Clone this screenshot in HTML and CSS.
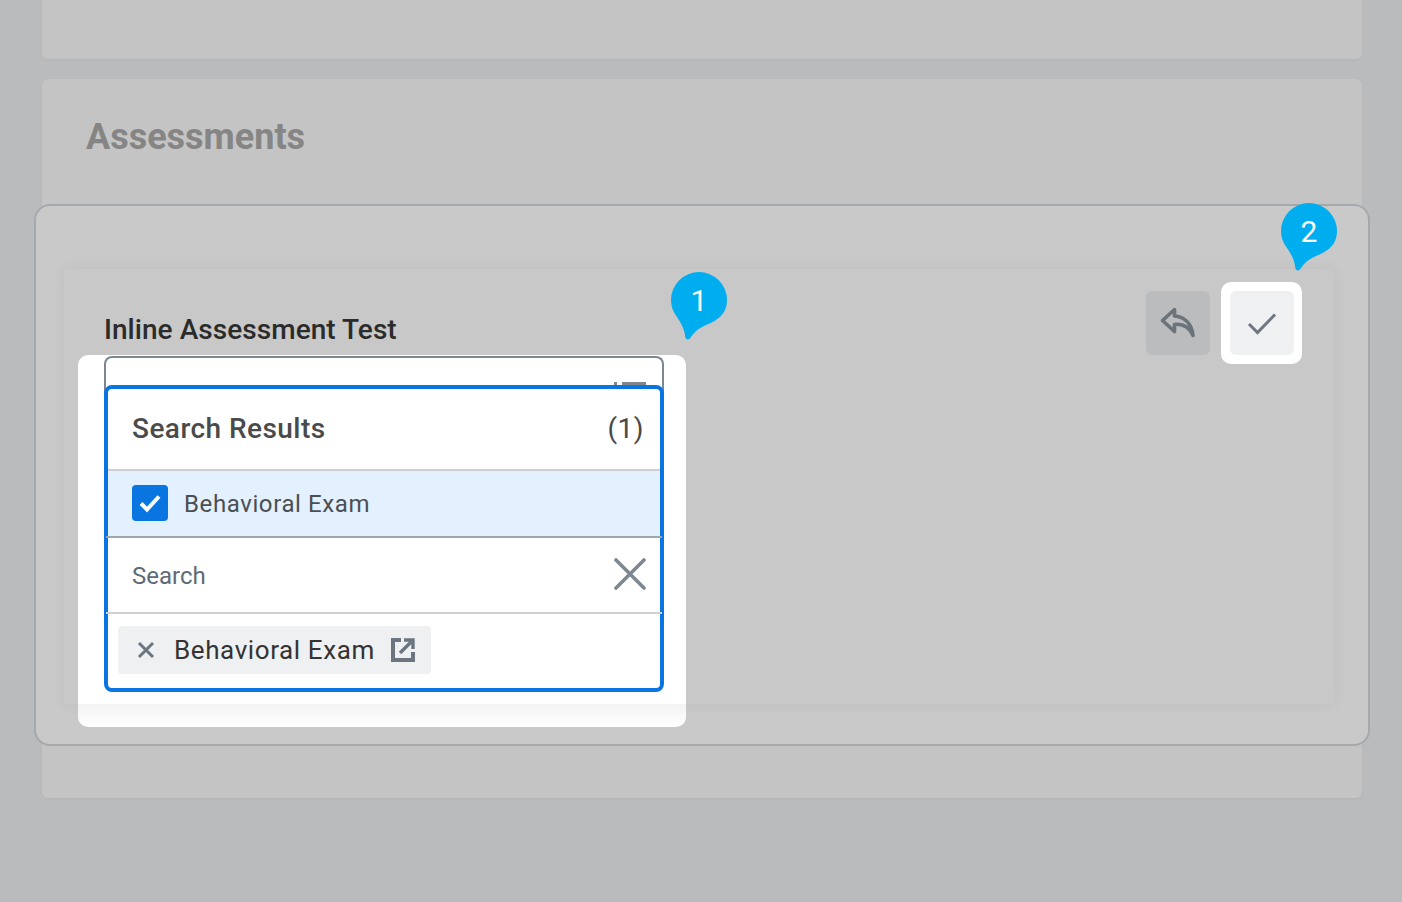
FILE: index.html
```html
<!DOCTYPE html>
<html lang="en">
<head>
<meta charset="utf-8">
<title>Assessments</title>
<link rel="stylesheet" href="styles.css">
</head>
<body>
<main class="page">
  <section class="card card-top"></section>
  <section class="card card-main"><h1 class="page-title">Assessments</h1></section>
</main>
<div class="modal">
  <div class="panel">
    <div class="spot spot-field"></div>
    <div class="panel-head">
      <h2 class="panel-title">Inline Assessment Test</h2>
      <div class="actions">
        <button class="btn btn-back" aria-label="Back">
          <svg width="36" height="32" viewBox="0 0 36 32" fill="none"><path d="M14.500 2.500 L2.500 13.500 L14.500 24.500 L14.500 17.500 C22 16.500 29 20 33 28.500 C32 17 24.500 9.500 14.500 9 Z" stroke="#6b737b" stroke-width="3.600" stroke-linejoin="round" stroke-linecap="round"/></svg>
        </button>
        <div class="spot-btn">
          <button class="btn btn-ok" aria-label="Confirm">
            <svg width="30" height="24" viewBox="0 0 30 24" fill="none"><path d="M2 13 L10.500 21.500 L28 3.500" stroke="#6f7780" stroke-width="3"/></svg>
          </button>
        </div>
      </div>
    </div>
    <div class="field">
      <svg class="field-icon" width="32" height="3" viewBox="0 0 32 3"><path d="M0 0h3v3H0zM8 0h24v3H8z" fill="#7e8791"/></svg>
      <div class="dropdown">
        <div class="results-head"><span>Search Results</span><span>(1)</span></div>
        <div class="result-row">
          <span class="checkbox"><svg width="24" height="20" viewBox="0 0 24 20" fill="none"><path d="M3 10.500 L9 16.500 L21 3.500" stroke="#fff" stroke-width="4"/></svg></span>
          <span>Behavioral Exam</span>
        </div>
        <div class="divider"></div>
        <div class="search-row">
          <span class="search-label">Search</span>
          <svg class="search-clear" width="32" height="32" viewBox="0 0 32 32" fill="none"><path d="M2 2 L30 30 M30 2 L2 30" stroke="#7e8791" stroke-width="3.600" stroke-linecap="round"/></svg>
        </div>
        <div class="chips">
          <div class="chip">
            <svg class="chip-x" width="18" height="18" viewBox="0 0 18 18" fill="none"><path d="M2 2 L16 16 M16 2 L2 16" stroke="#6b7680" stroke-width="3"/></svg>
            <span>Behavioral Exam</span>
            <svg class="chip-link" width="24" height="24" viewBox="0 0 24 24" fill="none"><path d="M10 2 H2 V22 H22 V14" stroke="#6b7680" stroke-width="4"/><path d="M9 15 L20 4 M13 2 H22 V11" stroke="#6b7680" stroke-width="3.400"/></svg>
          </div>
        </div>
      </div>
    </div>
  </div>
</div>
<svg class="pin pin-1" width="56" height="68" viewBox="0 0 56 68"><path d="M28 0A28 28 0 0 1 56 28C56 43 45 49 35 53C28 56 23 60 20 65C18 69 14 68 14 63C13 55 8 48 4 42C1 37 0 33 0 28A28 28 0 0 1 28 0Z" fill="#00aeef"/></svg>
<span class="pin-num pin-num-1">1</span>
<svg class="pin pin-2" width="56" height="68" viewBox="0 0 56 68"><path d="M28 0A28 28 0 0 1 56 28C56 43 45 49 35 53C28 56 23 60 20 65C18 69 14 68 14 63C13 55 8 48 4 42C1 37 0 33 0 28A28 28 0 0 1 28 0Z" fill="#00aeef"/></svg>
<span class="pin-num pin-num-2">2</span>
</body>
</html>
```

FILE: styles.css
```css
* { box-sizing: border-box; }
html, body { margin: 0; height: 100%; }
body {
  background: #babbbd;
  font-family: Roboto, "Liberation Sans", sans-serif;
  overflow: hidden;
  position: relative;
}
.page {
  display: flex;
  flex-direction: column;
  gap: 20px;
  padding: 0 40px 0 42px;
}
.card {
  background: #c4c4c4;
  border-radius: 0 0 6px 6px;
  box-shadow: 0 1px 3px rgba(0, 0, 0, 0.04);
}
.card-top { height: 59px; }
.card-main { height: 719px; border-radius: 6px; padding: 36px 44px; }
.page-title {
  margin: 0;
  font-size: 36px;
  line-height: 44px;
  font-weight: 700;
  color: #858585;
}
.modal {
  position: absolute;
  left: 34px;
  top: 204px;
  width: 1336px;
  height: 542px;
  padding: 63px 34px 0 28px;
  background: #c9c9c9;
  border: 2px solid #a5a9ae;
  border-radius: 16px;
}
.panel {
  position: relative;
  height: 435px;
  padding: 22px 40px 0;
  background: #c8c8c8;
  box-shadow: 0 0 14px rgba(0, 0, 0, 0.06);
}
.spot {
  position: absolute;
  background: linear-gradient(#fff 349px, #f3f3f3 349px, #fff 372px);
  border-radius: 10px;
}
.spot-field { left: 14px; top: 86px; width: 608px; height: 372px; }
.panel-head {
  position: relative;
  display: flex;
  justify-content: space-between;
  height: 65px;
}
.panel-title {
  margin: 0;
  align-self: flex-end;
  font-size: 28px;
  line-height: 34px;
  font-weight: 500;
  letter-spacing: 0.05px;
  color: #2b2b2b;
  padding-bottom: 9px;
}
.actions { display: flex; gap: 20px; align-items: flex-start; }
.btn {
  width: 64px;
  height: 64px;
  padding: 0;
  border: 0;
  border-radius: 6px;
  display: flex;
  align-items: center;
  justify-content: center;
}
.btn-back { background: #bbbcbd; }
.btn-ok { background: #eff0f2; }
.spot-btn {
  position: relative;
  margin: -9px -8px -9px -9px;
  padding: 9px 8px 9px 9px;
  background: #fff;
  border-radius: 10px;
}
.field {
  position: relative;
  width: 560px;
  height: 60px;
  background: #fff;
  border: 2px solid #7e8791;
  border-bottom: 0;
  border-radius: 8px 8px 0 0;
}
.field-icon { position: absolute; left: 508px; top: 24px; }
.dropdown {
  position: absolute;
  left: -2px;
  top: 27px;
  width: 560px;
  height: 307px;
  display: flex;
  flex-direction: column;
  background: #fff;
  border: 4px solid #0875e1;
  border-radius: 8px;
}
.results-head {
  height: 82px;
  padding: 0 16px 2px 24px;
  display: flex;
  align-items: center;
  justify-content: space-between;
  font-size: 28px;
  font-weight: 500;
  color: #4a4a4a;
  border-bottom: 2px solid #ced0d3;
  letter-spacing: 0.45px;
}
.results-head span:last-child { font-weight: 400; }
.result-row {
  height: 65px;
  padding: 0 24px;
  display: flex;
  align-items: center;
  gap: 16px;
  background: #e3f0fe;
  font-size: 24px;
  color: #4a4f54;
  letter-spacing: 0.6px;
}
.divider {
  height: 2px;
  margin: 0 -2px;
  position: relative;
  background: #a0a5ab;
}
.checkbox {
  width: 36px;
  height: 36px;
  margin-bottom: 1px;
  border-radius: 4px;
  background: #0875e1;
  display: flex;
  align-items: center;
  justify-content: center;
}
.search-row {
  height: 76px;
  margin: 0 -2px;
  padding: 0 16px 0 26px;
  display: flex;
  align-items: center;
  justify-content: space-between;
  border-bottom: 2px solid #ced0d3;
  font-size: 24px;
  color: #5e6a75;
}
.search-label { margin-top: 2px; }
.search-clear { margin-bottom: 2px; }
.chips { padding: 12px 10px; }
.chip {
  width: 313px;
  height: 48px;
  padding: 0 16px 0 19px;
  display: flex;
  align-items: center;
  background: #eff0f2;
  border-radius: 4px;
  font-size: 26px;
  color: #333;
  letter-spacing: 0.6px;
}
.chip-x { margin-right: 19px; }
.chip-link { margin-left: auto; }
.pin { position: absolute; }
.pin-1 { left: 671px; top: 272px; }
.pin-2 { left: 1281px; top: 203px; }
.pin-num {
  position: absolute;
  width: 56px;
  text-align: center;
  font-size: 30px;
  line-height: 36px;
  color: #fff;
}
.pin-num-1 { left: 671px; top: 283px; }
.pin-num-2 { left: 1281px; top: 214px; }
```
